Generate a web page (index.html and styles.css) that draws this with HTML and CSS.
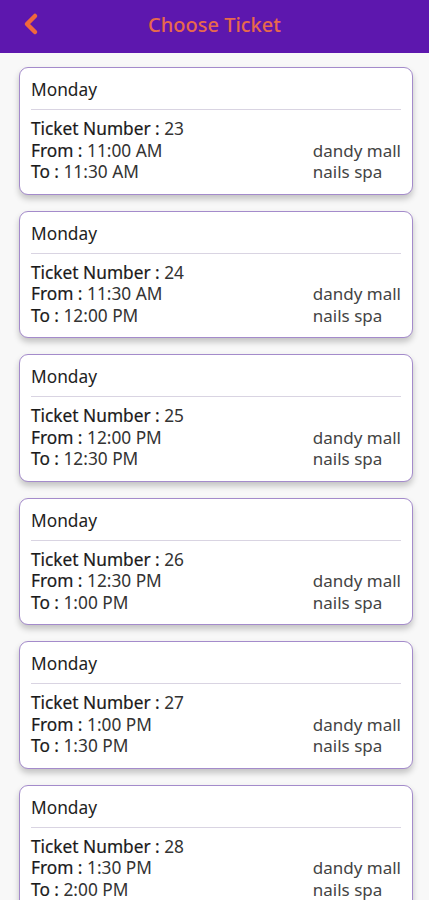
FILE: index.html
```html
<!DOCTYPE html>
<html lang="en">
<head>
    <meta charset="UTF-8">
    <meta name="viewport" content="width=device-width, initial-scale=1.0">
    <title>Choose Ticket</title>
    <link rel="stylesheet" href="styles.css">
</head>
<body>

    <div class="header">
        <svg class="back" width="20" height="24" viewBox="0 0 20 24">
            <path d="M14 4 L6 12 L14 20" fill="none" stroke="#f0683c" stroke-width="4.5" stroke-linecap="round" stroke-linejoin="round"/>
        </svg>
        <h1>Choose Ticket</h1>
    </div>

    <div class="list">
        <div class="ticket">
            <div class="day">Monday</div>
            <div class="info">
                <div class="times">
                    <div><span class="label">Ticket Number :</span> 23</div>
                    <div><span class="label">From :</span> 11:00 AM</div>
                    <div><span class="label">To :</span> 11:30 AM</div>
                </div>
                <div class="place">
                    <div>dandy mall</div>
                    <div>nails spa</div>
                </div>
            </div>
        </div>
        <div class="ticket">
            <div class="day">Monday</div>
            <div class="info">
                <div class="times">
                    <div><span class="label">Ticket Number :</span> 24</div>
                    <div><span class="label">From :</span> 11:30 AM</div>
                    <div><span class="label">To :</span> 12:00 PM</div>
                </div>
                <div class="place">
                    <div>dandy mall</div>
                    <div>nails spa</div>
                </div>
            </div>
        </div>
        <div class="ticket">
            <div class="day">Monday</div>
            <div class="info">
                <div class="times">
                    <div><span class="label">Ticket Number :</span> 25</div>
                    <div><span class="label">From :</span> 12:00 PM</div>
                    <div><span class="label">To :</span> 12:30 PM</div>
                </div>
                <div class="place">
                    <div>dandy mall</div>
                    <div>nails spa</div>
                </div>
            </div>
        </div>
        <div class="ticket">
            <div class="day">Monday</div>
            <div class="info">
                <div class="times">
                    <div><span class="label">Ticket Number :</span> 26</div>
                    <div><span class="label">From :</span> 12:30 PM</div>
                    <div><span class="label">To :</span> 1:00 PM</div>
                </div>
                <div class="place">
                    <div>dandy mall</div>
                    <div>nails spa</div>
                </div>
            </div>
        </div>
        <div class="ticket">
            <div class="day">Monday</div>
            <div class="info">
                <div class="times">
                    <div><span class="label">Ticket Number :</span> 27</div>
                    <div><span class="label">From :</span> 1:00 PM</div>
                    <div><span class="label">To :</span> 1:30 PM</div>
                </div>
                <div class="place">
                    <div>dandy mall</div>
                    <div>nails spa</div>
                </div>
            </div>
        </div>
        <div class="ticket">
            <div class="day">Monday</div>
            <div class="info">
                <div class="times">
                    <div><span class="label">Ticket Number :</span> 28</div>
                    <div><span class="label">From :</span> 1:30 PM</div>
                    <div><span class="label">To :</span> 2:00 PM</div>
                </div>
                <div class="place">
                    <div>dandy mall</div>
                    <div>nails spa</div>
                </div>
            </div>
        </div>
    </div>

</body>
</html>
```

FILE: styles.css
```css
body {
    margin: 0;
    font-family: "Noto Sans", "Open Sans", sans-serif;
    background-color: #f8f8f8;
    color: #333;
    overflow: hidden;
}
.header {
    position: relative;
    height: 53px;
    background-color: #5d17ae;
    display: flex;
    align-items: center;
    justify-content: center;
}
.back {
    position: absolute;
    left: 21px;
    top: 12px;
}
h1 {
    margin: 0 0 4px 0;
    font-size: 20px;
    font-weight: 500;
    color: #e8694c;
}
.list {
    padding: 14px 16px 0 19px;
    display: flex;
    flex-direction: column;
    gap: 16px;
}
.ticket {
    background: white;
    border: 1.5px solid #a48bcb;
    border-radius: 9px;
    padding: 11px 11px 11px 11px;
    box-shadow: 0 4px 6px rgba(0, 0, 0, 0.22);
    font-size: 17.3px;
}
.day {
    line-height: 22px;
    color: #222;
    padding-bottom: 8px;
    border-bottom: 1px solid #d9d4e2;
    margin-bottom: 8px;
}
.info {
    display: flex;
    justify-content: space-between;
    align-items: flex-end;
    line-height: 21.5px;
}
.label {
    color: #1a1a1a;
    -webkit-text-stroke: 0.2px #1a1a1a;
}
.place {
    color: #444;
    font-size: 17px;
}
```
